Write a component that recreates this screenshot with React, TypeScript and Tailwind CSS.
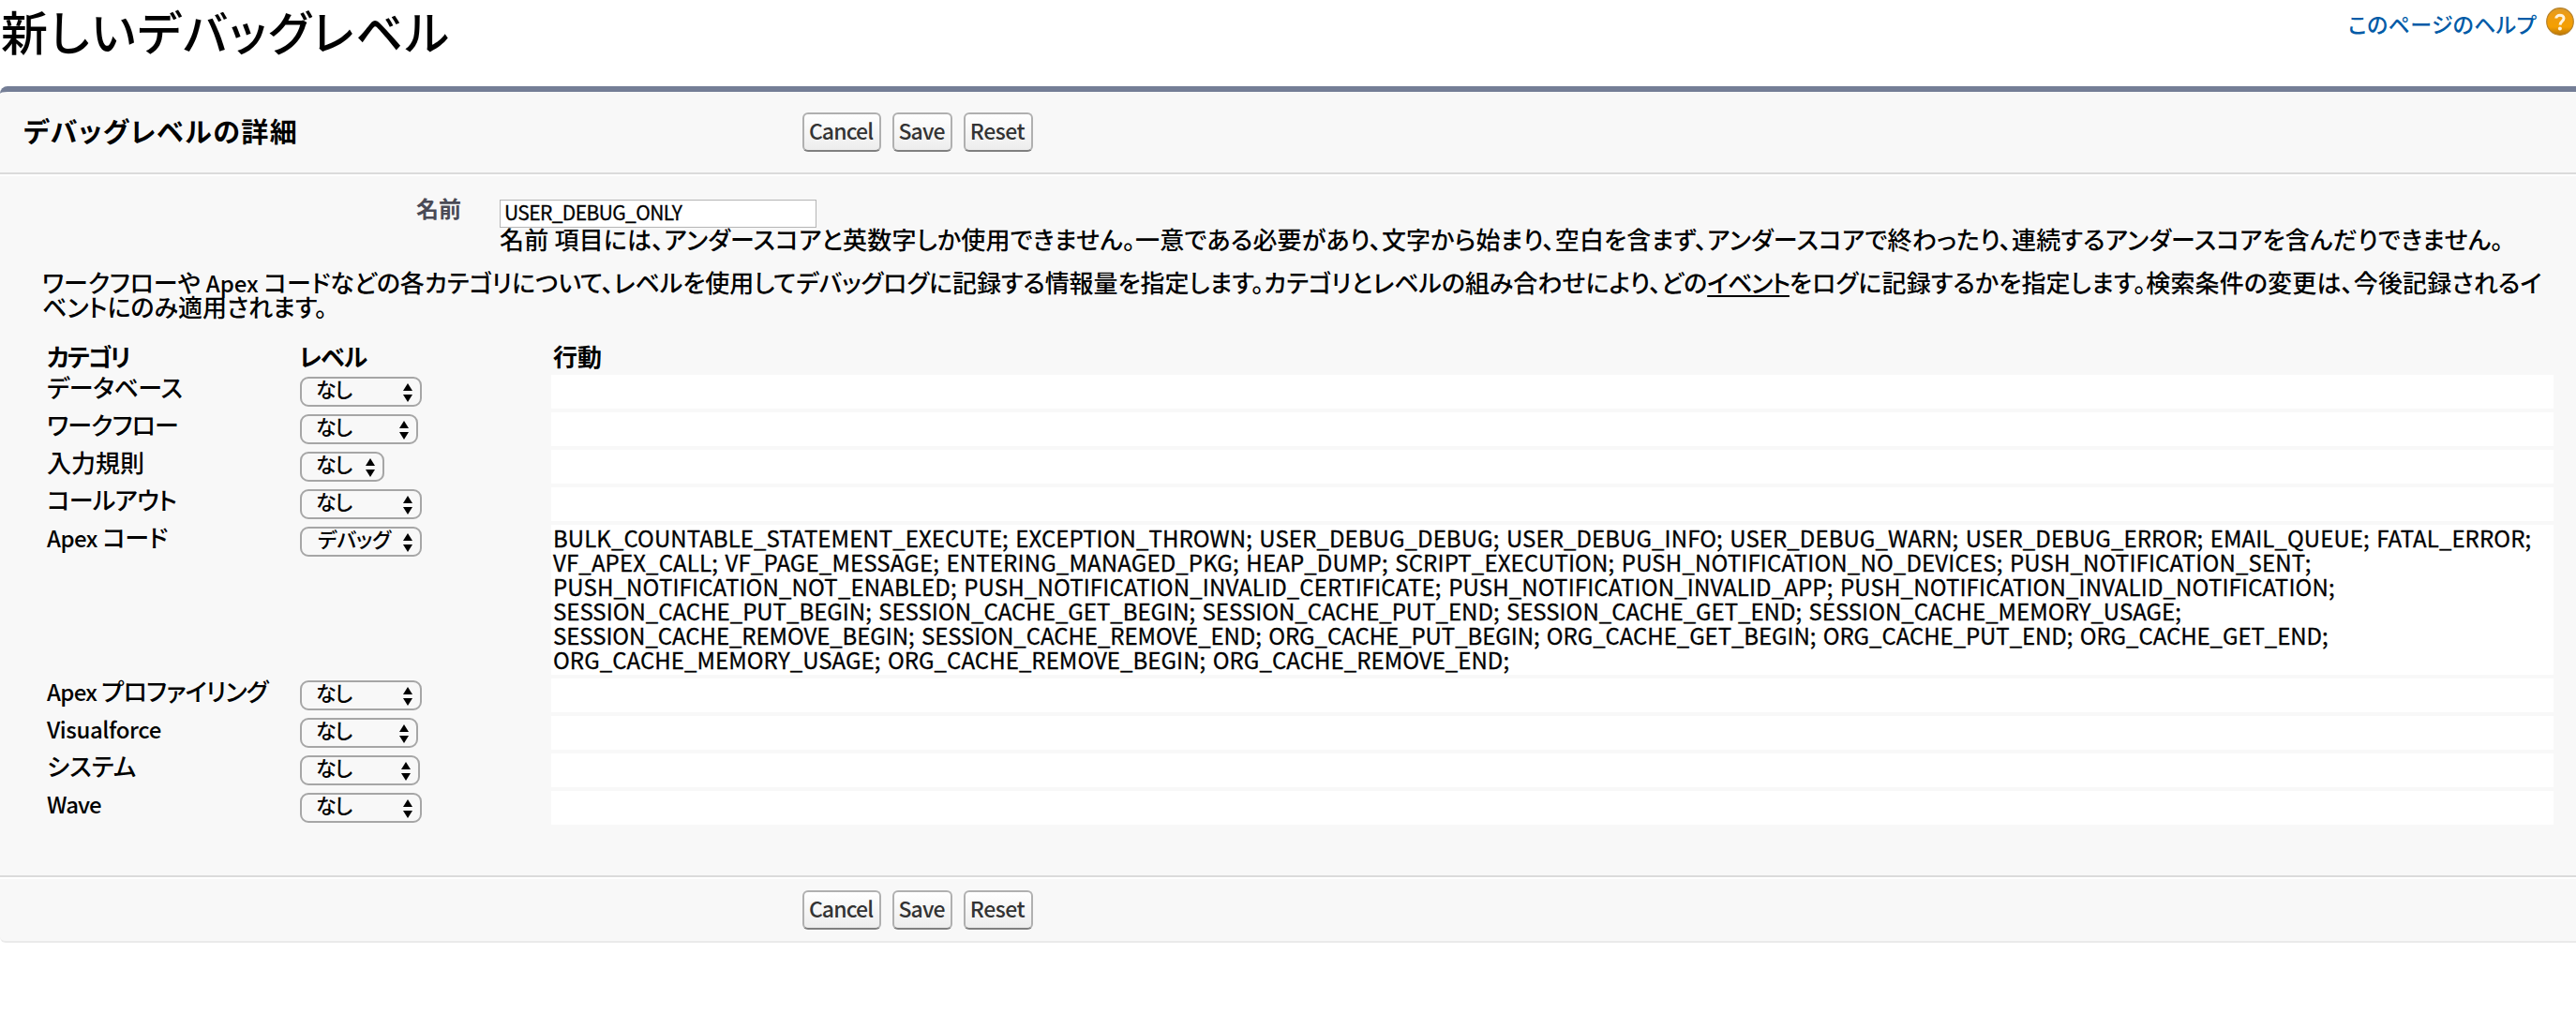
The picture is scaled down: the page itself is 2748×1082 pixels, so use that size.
type Level = {
  name: string;
  nameClass: string;
  value: string;
  selectClass: string;
  actions?: { text: string; className: string }[];
};

const apexActions = [
  {
    text: "BULK_COUNTABLE_STATEMENT_EXECUTE; EXCEPTION_THROWN; USER_DEBUG_DEBUG; USER_DEBUG_INFO; USER_DEBUG_WARN; USER_DEBUG_ERROR; EMAIL_QUEUE; FATAL_ERROR;",
    className: "tracking-[0.08px]",
  },
  {
    text: "VF_APEX_CALL; VF_PAGE_MESSAGE; ENTERING_MANAGED_PKG; HEAP_DUMP; SCRIPT_EXECUTION; PUSH_NOTIFICATION_NO_DEVICES; PUSH_NOTIFICATION_SENT;",
    className: "tracking-[0.14px]",
  },
  {
    text: "PUSH_NOTIFICATION_NOT_ENABLED; PUSH_NOTIFICATION_INVALID_CERTIFICATE; PUSH_NOTIFICATION_INVALID_APP; PUSH_NOTIFICATION_INVALID_NOTIFICATION;",
    className: "tracking-[0.14px]",
  },
  {
    text: "SESSION_CACHE_PUT_BEGIN; SESSION_CACHE_GET_BEGIN; SESSION_CACHE_PUT_END; SESSION_CACHE_GET_END; SESSION_CACHE_MEMORY_USAGE;",
    className: "tracking-[-0.01px]",
  },
  {
    text: "SESSION_CACHE_REMOVE_BEGIN; SESSION_CACHE_REMOVE_END; ORG_CACHE_PUT_BEGIN; ORG_CACHE_GET_BEGIN; ORG_CACHE_PUT_END; ORG_CACHE_GET_END;",
    className: "tracking-[-0.07px]",
  },
  {
    text: "ORG_CACHE_MEMORY_USAGE; ORG_CACHE_REMOVE_BEGIN; ORG_CACHE_REMOVE_END;",
    className: "tracking-[0.05px]",
  },
];

const levels: Level[] = [
  { name: "データベース", nameClass: "tracking-[-0.4px]", value: "なし", selectClass: "w-[130px]" },
  { name: "ワークフロー", nameClass: "tracking-[-0.8px]", value: "なし", selectClass: "w-[126px]" },
  { name: "入力規則", nameClass: "", value: "なし", selectClass: "w-[90px]" },
  { name: "コールアウト", nameClass: "tracking-[-0.7px]", value: "なし", selectClass: "w-[130px]" },
  { name: "Apex コード", nameClass: "tracking-[-0.5px]", value: "デバッグ", selectClass: "w-[130px]", actions: apexActions },
  { name: "Apex プロファイリング", nameClass: "tracking-[-0.7px]", value: "なし", selectClass: "w-[130px]" },
  { name: "Visualforce", nameClass: "tracking-[-0.4px]", value: "なし", selectClass: "w-[126px]" },
  { name: "システム", nameClass: "tracking-[0.2px]", value: "なし", selectClass: "w-[128px]" },
  { name: "Wave", nameClass: "tracking-[-0.9px]", value: "なし", selectClass: "w-[130px]" },
];

/* Latin words are set slightly smaller than the kana beside them. */
function Mixed({ text }: { text: string }) {
  return (
    <>
      {text.split(/([A-Za-z]+)/).map((part, i) =>
        i % 2 ? (
          <span key={i} className="text-[24px] leading-none">
            {part}
          </span>
        ) : (
          part
        ),
      )}
    </>
  );
}

function Button({ label, className }: { label: string; className: string }) {
  return (
    <button
      className={`flex h-[42px] items-center justify-center rounded-[6px] border-2 border-[#b0b0b0] border-b-[#7f7f7f] bg-linear-to-b from-white to-[#ededed] pr-[2px] pb-[3px] text-[23px] leading-none font-medium text-[#333] ${className}`}
    >
      {label}
    </button>
  );
}

function ButtonRow() {
  return (
    <div className="ml-[856px] flex gap-3">
      <Button label="Cancel" className="w-[84px] tracking-[-0.9px]" />
      <Button label="Save" className="w-[64px] tracking-[-0.9px]" />
      <Button label="Reset" className="w-[74px] tracking-[-0.5px]" />
    </div>
  );
}

function Select({ value, className }: { value: string; className: string }) {
  return (
    <div
      className={`mt-[2px] flex h-[32px] items-center justify-between rounded-[9px] border-2 border-[#a6a6a6] pr-[8px] pl-[15px] ${className}`}
    >
      <span
        className={`-mt-[8px] text-[22px] leading-[26px] whitespace-nowrap ${value === "なし" ? "tracking-[-1.2px]" : "ml-[2px] tracking-[-0.2px]"}`}
      >
        {value}
      </span>
      <svg width="10" height="20" viewBox="0 0 10 20" className="mt-[2px] shrink-0">
        <path d="M5 0 L10 8 H0 Z M0 12 H10 L5 20 Z" fill="#000" />
      </svg>
    </div>
  );
}

function Divider() {
  return <div className="h-1 border-t-2 border-[#dbdbdb] bg-white" />;
}

export default function App() {
  return (
    <div className="h-[1082px] w-[2748px] overflow-hidden bg-white font-['Noto_Sans_CJK_JP',sans-serif] font-medium text-black [font-feature-settings:'palt']">
      <header className="flex h-[92px] items-start justify-between pr-[2px]">
        <h1 className="ml-[1px] text-[50px] leading-[64px] tracking-[2px]">新しいデバッグレベル</h1>
        <a className="mt-[8px] flex items-center gap-[10px] text-[#015ba7]">
          <span className="mt-[3px] text-[23px] leading-[26px] tracking-[0.3px]">このページのヘルプ</span>
          <svg width="30" height="30" viewBox="0 0 30 30" className="shrink-0">
            <defs>
              <linearGradient id="help" x1="0" y1="0" x2="0" y2="1">
                <stop offset="0" stopColor="#dc9a28" />
                <stop offset="0.25" stopColor="#ee9c12" />
                <stop offset="0.7" stopColor="#f59f00" />
                <stop offset="1" stopColor="#b97608" />
              </linearGradient>
            </defs>
            <circle cx="15" cy="15" r="14.3" fill="url(#help)" stroke="#b5812a" strokeWidth="1.2" />
            <path
              d="M10.8 11.6 C10.8 7.2 19 7 19 11.6 C19 14.6 15.2 14.6 15 18.6"
              fill="none"
              stroke="#fff3dc"
              strokeWidth="3"
            />
            <circle cx="14.9" cy="22.4" r="2" fill="#fff3dc" />
          </svg>
        </a>
      </header>

      <main className="h-[914px] overflow-hidden rounded-tl-[8px] rounded-bl-[6px] border-t-[6px] border-b-2 border-t-[#747e96] border-b-[#eaeaea] bg-[#f8f8f8]">
        <div className="flex h-[86px] items-start pt-[22px]">
          <h2 className="-mr-[317px] ml-[25px] w-[317px] pt-[4px] text-[29px] leading-[30px] font-bold tracking-[1.5px] whitespace-nowrap">
            デバッグレベルの詳細
          </h2>
          <div className="-ml-[25px] flex">
            <ButtonRow />
          </div>
        </div>
        <Divider />

        <div className="flex pt-[25px]">
          <label className="mt-[-4px] w-[492px] text-right text-[24px] leading-[26px] font-bold text-[#4a4a56]">名前</label>
          <div className="ml-[41px]">
            <input
              readOnly
              value="USER_DEBUG_ONLY"
              className="block h-[30px] w-[338px] border border-[#b5b5b5] bg-white pb-[5px] pl-[4px] text-[21px] leading-[24px] font-normal tracking-[-0.6px] outline-none [-webkit-text-stroke:0.3px_#000]"
            />
            <p className="h-[26px] text-[26px] leading-[24px] tracking-[0.2px] whitespace-nowrap">
              名前
              項目には、アンダースコアと英数字しか使用できません。一意である必要があり、文字から始まり、空白を含まず、アンダースコアで終わったり、連続するアンダースコアを含んだりできません。
            </p>
          </div>
        </div>

        <p className="mt-[19px] ml-[45px] h-[53px] text-[26px] leading-[26px] tracking-[-0.03px] whitespace-nowrap">
          <Mixed text="ワークフローや Apex コードなどの各カテゴリについて、レベルを使用してデバッグログに記録する情報量を指定します。カテゴリとレベルの組み合わせにより、どの" />
          <a className="tracking-[-1.2px] underline decoration-2 underline-offset-[3px]">イベント</a>
          <span className="tracking-[0.16px]">をログに記録するかを指定します。検索条件の変更は、今後記録されるイ</span>
          <br />
          ベントにのみ適用されます。
        </p>

        <div className="mt-[26px] ml-[50px] flex h-[33px] text-[26px] leading-[25px] font-bold">
          <span className="w-[269px] tracking-[-2.2px]">カテゴリ</span>
          <span className="w-[271px] tracking-[-1px]">レベル</span>
          <span>行動</span>
        </div>
        <div className="mr-[24px] ml-[50px] flex flex-col gap-1">
          {levels.map((level) => (
            <div key={level.name} className="flex min-h-[36px] text-[26px] leading-[26px]">
              <span className={`w-[270px] whitespace-nowrap ${level.nameClass}`}>
                <Mixed text={level.name} />
              </span>
              <div className="w-[268px]">
                <Select value={level.value} className={level.selectClass} />
              </div>
              <div className="flex-1 bg-white">
                {level.actions && (
                  <div className="pt-[1px] pb-[3px] pl-[2px] text-[24px] leading-[26px] font-normal [word-spacing:2px] whitespace-nowrap [-webkit-text-stroke:0.3px_#000]">
                    {level.actions.map((line) => (
                      <p key={line.text} className={line.className}>
                        {line.text}
                      </p>
                    ))}
                  </div>
                )}
              </div>
            </div>
          ))}
        </div>

        <div className="mt-[54px]">
          <Divider />
        </div>
        <div className="mt-[12px]">
          <ButtonRow />
        </div>
      </main>
    </div>
  );
}
